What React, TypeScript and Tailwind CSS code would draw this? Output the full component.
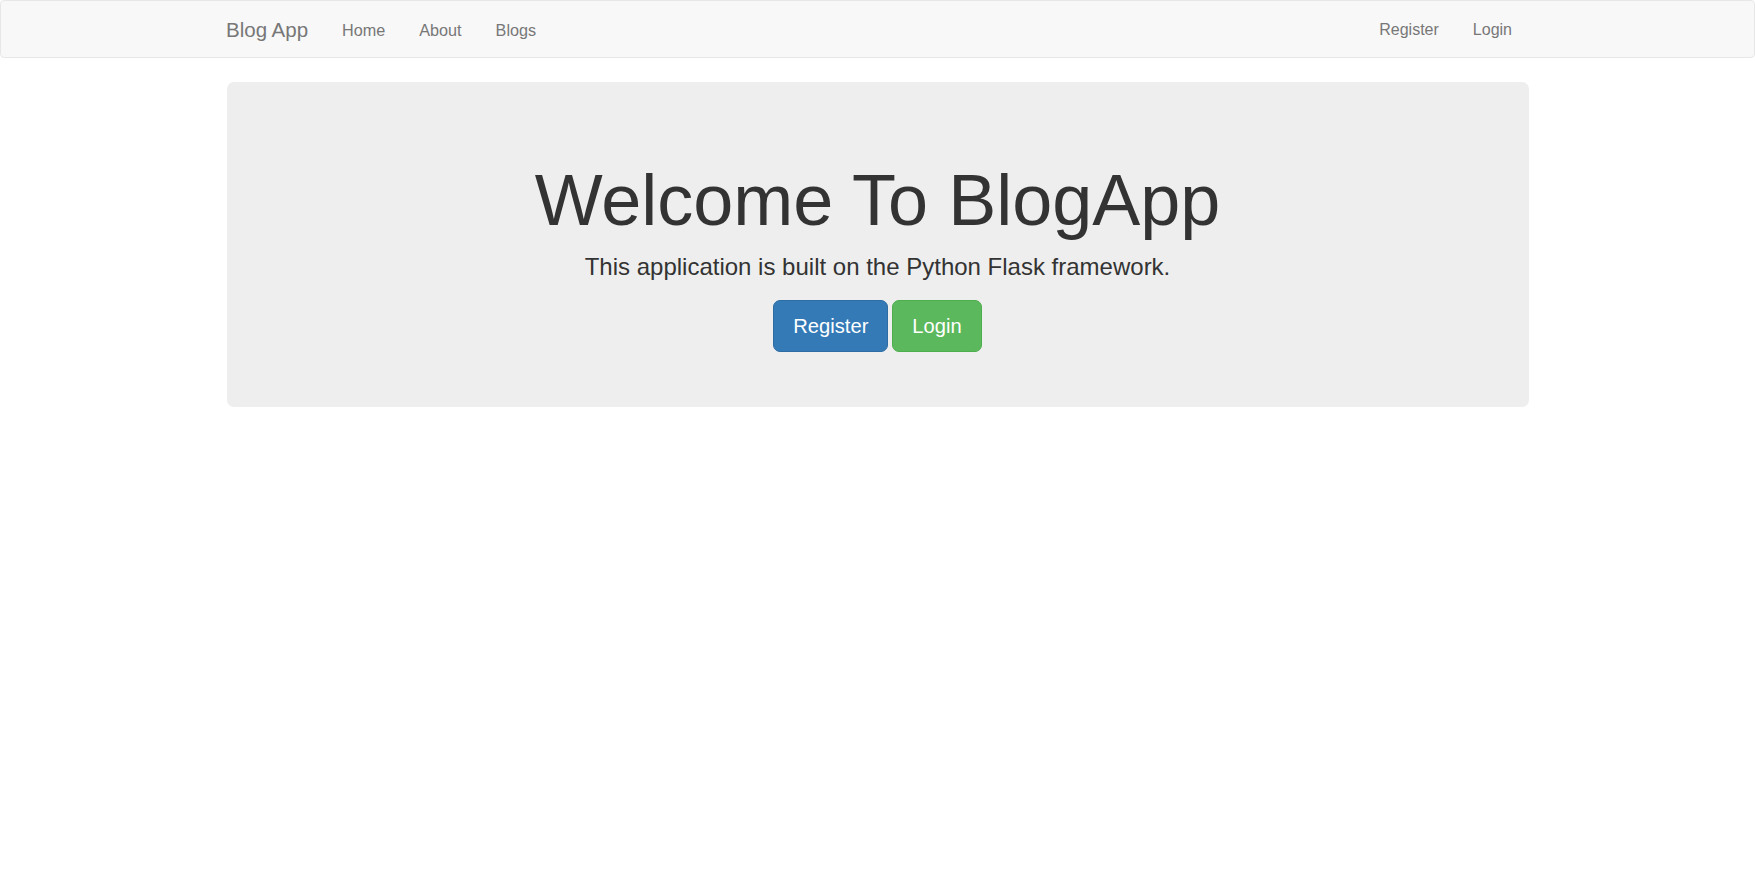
import React from "react";

export default function App() {
  const font = { fontFamily: '"Liberation Sans", Arial, Helvetica, sans-serif' };
  return (
    <div className="min-h-[872px] bg-white" style={font}>
      <nav className="h-[58px] bg-[#f8f8f8] border border-[#e7e7e7] rounded-[4px] flex items-stretch justify-between pl-[208px] pr-[225px] pt-[1px]">
        <div className="flex items-stretch">
          <a className="px-[17px] flex items-center text-[20.5px] leading-[22px] text-[#777]">Blog App</a>
          <a className="px-[17px] flex items-center text-[16.2px] leading-[22px] text-[#777]">Home</a>
          <a className="px-[17px] flex items-center text-[16.2px] leading-[22px] text-[#777]">About</a>
          <a className="px-[17px] flex items-center text-[16.2px] leading-[22px] text-[#777]">Blogs</a>
        </div>
        <div className="flex items-stretch">
          <a className="px-[17px] flex items-center text-[16px] leading-[22px] text-[#777]">Register</a>
          <a className="px-[17px] flex items-center text-[16px] leading-[22px] text-[#777]">Login</a>
        </div>
      </nav>
      <div className="mt-[24px] mx-auto w-[1302px] bg-[#eeeeee] rounded-[7px] pt-[79px] pb-[55px] flex flex-col items-center text-[#333]">
        <h1 className="text-[72px] leading-[78px] font-normal mb-[11px]">Welcome To BlogApp</h1>
        <p className="text-[24px] leading-[34px] mb-[16px]">This application is built on the Python Flask framework.</p>
        <div className="flex gap-[4px]">
          <a className="h-[52px] px-[19px] flex items-center text-[20.16px] text-white bg-[#337ab7] border border-[#2e6da4] rounded-[7px]">Register</a>
          <a className="h-[52px] px-[19px] flex items-center text-[20.16px] text-white bg-[#5cb85c] border border-[#4cae4c] rounded-[7px]">Login</a>
        </div>
      </div>
    </div>
  );
}
